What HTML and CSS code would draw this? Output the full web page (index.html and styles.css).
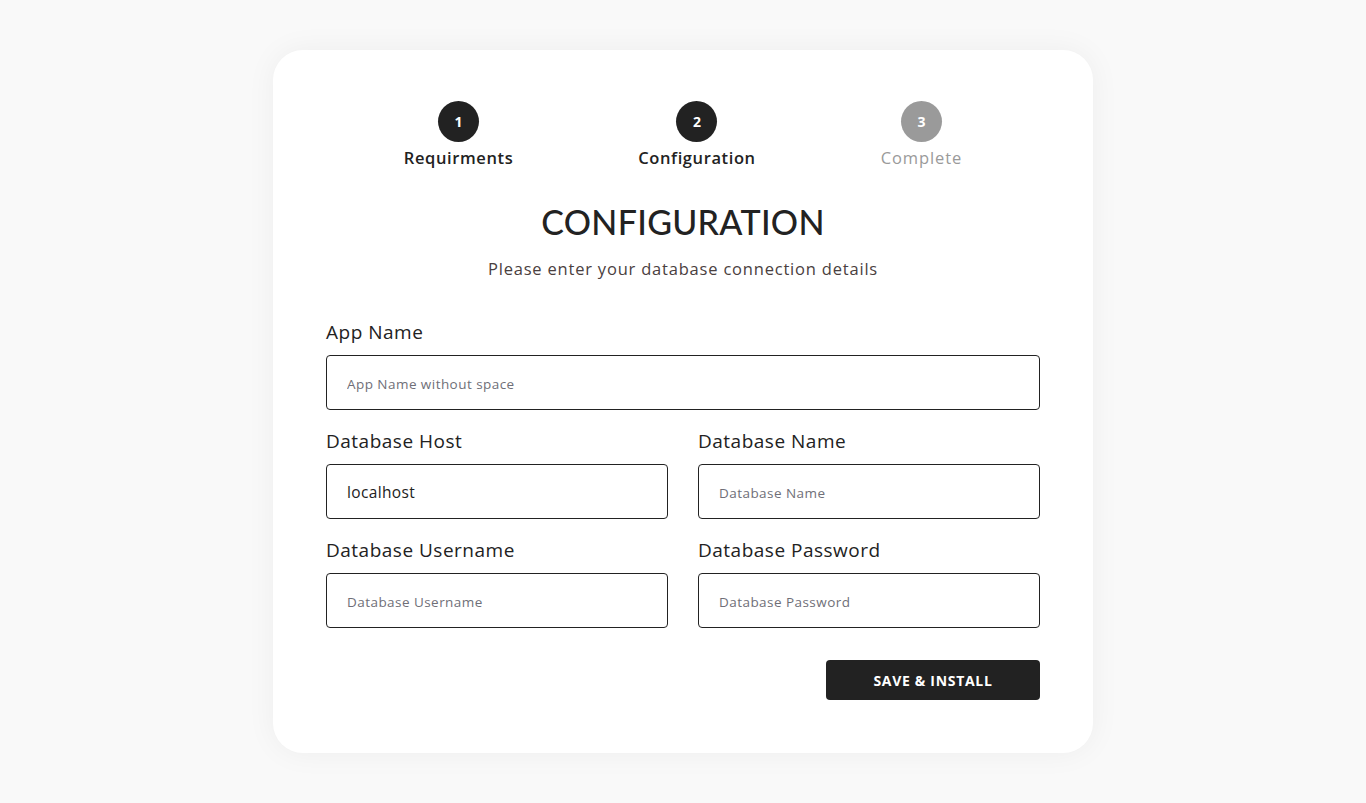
FILE: index.html
```html
<!DOCTYPE html>
<html lang="en">
<head>
<meta charset="utf-8">
<title>Installer - Configuration</title>
<link rel="stylesheet" href="styles.css">
</head>
<body>
<main class="card">
  <div class="steps">
    <div class="step done">
      <span class="circle">1</span>
      <span class="step-label">Requirments</span>
    </div>
    <div class="step active">
      <span class="circle">2</span>
      <span class="step-label">Configuration</span>
    </div>
    <div class="step pending">
      <span class="circle">3</span>
      <span class="step-label">Complete</span>
    </div>
  </div>

  <h1 class="title">CONFIGURATION</h1>
  <p class="subtitle">Please enter your database connection details</p>

  <form class="form">
    <div class="field">
      <label class="label" for="app">App Name</label>
      <input class="input" id="app" type="text" placeholder="App Name without space">
    </div>
    <div class="row">
      <div class="field">
        <label class="label" for="host">Database Host</label>
        <input class="input" id="host" type="text" value="localhost">
      </div>
      <div class="field">
        <label class="label" for="dbname">Database Name</label>
        <input class="input" id="dbname" type="text" placeholder="Database Name">
      </div>
    </div>
    <div class="row">
      <div class="field">
        <label class="label" for="user">Database Username</label>
        <input class="input" id="user" type="text" placeholder="Database Username">
      </div>
      <div class="field">
        <label class="label" for="pass">Database Password</label>
        <input class="input" id="pass" type="password" placeholder="Database Password">
      </div>
    </div>
    <div class="actions">
      <button class="btn" type="button">SAVE &amp; INSTALL</button>
    </div>
  </form>
</main>
</body>
</html>
```

FILE: styles.css
```css
* { box-sizing: border-box; }

html, body { margin: 0; padding: 0; }

body {
  background: #f9f9f9;
  font-family: "Open Sans", "Noto Sans", sans-serif;
  color: #222;
  padding: 50px 0;
}

.card {
  width: 820px;
  margin: 0 auto;
  background: #fff;
  border-radius: 30px;
  box-shadow: 0 0 30px rgba(0, 0, 0, 0.05);
  padding: 51px 53px 53px;
}

.steps {
  display: flex;
  justify-content: center;
  gap: 125px;
}

.step {
  display: flex;
  flex-direction: column;
  align-items: center;
}

.circle {
  width: 41px;
  height: 41px;
  border-radius: 50%;
  background: #222;
  color: #fff;
  font-weight: 700;
  font-size: 14px;
  display: flex;
  align-items: center;
  justify-content: center;
}

.step-label {
  margin-top: 6px;
  font-size: 16.5px;
  line-height: 20px;
  font-weight: 600;
  letter-spacing: 0.6px;
  color: #222;
}

.step.pending .circle { background: #9a9a9a; }
.step.pending .step-label { color: #9a9a9a; font-weight: 400; letter-spacing: 0.9px; }

.title {
  margin: 33px 0 0;
  text-align: center;
  font-family: "Lato", sans-serif;
  font-size: 34px;
  line-height: 41px;
  font-weight: 500;
  letter-spacing: 0.3px;
  color: #222;
}

.subtitle {
  margin: 16px 0 0;
  text-align: center;
  font-size: 16.5px;
  line-height: 22px;
  letter-spacing: 0.8px;
  color: #4a4040;
}

.form {
  margin-top: 39px;
  display: flex;
  flex-direction: column;
  gap: 18px;
}

.row {
  display: grid;
  grid-template-columns: 1fr 1fr;
  gap: 30px;
}

.field {
  display: flex;
  flex-direction: column;
}

.label {
  font-size: 19px;
  line-height: 26px;
  letter-spacing: 0.5px;
  color: #222;
  margin-bottom: 10px;
}

.input {
  height: 55px;
  border: 1px solid #222;
  border-radius: 4px;
  padding: 0 20px;
  font-family: inherit;
  font-size: 15.5px;
  letter-spacing: 0.35px;
  color: #222;
  background: #fff;
  outline: none;
}

.input::placeholder {
  font-size: 13.5px;
  letter-spacing: 0.45px;
  color: #6f6f78;
}

.actions {
  margin-top: 14px;
  display: flex;
  justify-content: flex-end;
}

.btn {
  width: 214px;
  height: 40px;
  border: none;
  border-radius: 4px;
  background: #222;
  color: #fff;
  font-family: inherit;
  font-weight: 700;
  font-size: 14px;
  letter-spacing: 0.7px;
  cursor: pointer;
}
```
